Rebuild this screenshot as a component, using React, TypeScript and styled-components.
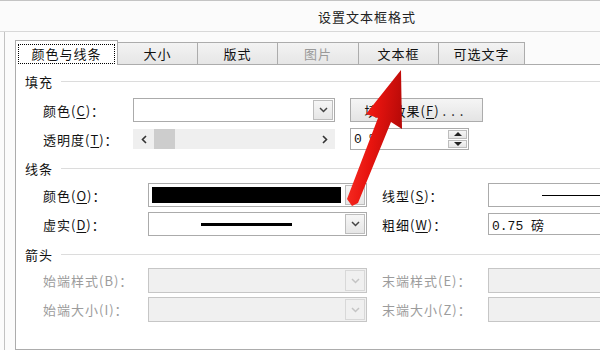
import React from 'react';
import styled, { createGlobalStyle } from 'styled-components';

const GlobalStyle = createGlobalStyle`
  html, body { margin: 0; padding: 0; background: #fff; overflow: hidden; }
  body {
    font-family: "Noto Sans CJK SC", "Noto Sans", sans-serif;
    font-size: 13px;
    color: #111;
  }
  * { box-sizing: border-box; }
`;

const Window = styled.div`
  position: relative;
  width: 600px;
  height: 350px;
  overflow: hidden;
  background: #fbfbfb;
  border-top: 1px solid #c4c4c4;
  display: flex;
  flex-direction: column;
`;

const TitleBar = styled.div`
  flex: none;
  height: 31px;
  display: flex;
  align-items: center;
  padding-left: 318px;
  border-bottom: 1px solid #d8d8d8;
  letter-spacing: 1px;
  color: #222;
`;

const Body = styled.div`
  flex: 1;
  margin-left: 4px;
  border-left: 1px solid #c2c2c2;
  padding: 8px 0 0 10px;
  display: flex;
  flex-direction: column;
`;

const TabStrip = styled.div`
  flex: none;
  height: 24px;
  display: flex;
  align-items: flex-end;
`;

const Tab = styled.div<{ $w: number; $active?: boolean; $disabled?: boolean }>`
  position: relative;
  z-index: ${p => (p.$active ? 2 : 1)};
  width: ${p => p.$w}px;
  height: ${p => (p.$active ? 25 : 22)}px;
  margin-left: ${p => (p.$active ? 0 : -1)}px;
  margin-bottom: ${p => (p.$active ? -1 : 0)}px;
  border: 1px solid #acacac;
  border-bottom: none;
  background: ${p => (p.$active ? '#fff' : 'linear-gradient(#f3f3f3, #e6e6e6)')};
  color: ${p => (p.$disabled ? '#9a9a9a' : '#111')};
  letter-spacing: 1px;
  display: flex;
  align-items: center;
  justify-content: center;
  padding: ${p => (p.$active ? '2px 2px 1px' : '0')};
`;

const FocusRing = styled.div`
  width: 100%;
  height: 20px;
  border: 1px dotted #000;
  display: flex;
  align-items: center;
  justify-content: center;
`;

const Panel = styled.div`
  flex: 1;
  border: 1px solid #acacac;
  border-right: none;
  background: #fff;
  padding-top: 8px;
`;

const SectionHead = styled.div<{ $mt?: number }>`
  display: flex;
  align-items: center;
  height: 16px;
  margin-top: ${p => p.$mt || 0}px;
  padding-left: 9px;
  letter-spacing: 1px;
  color: #111;

  &::after {
    content: '';
    flex: 1;
    height: 1px;
    margin-left: 8px;
    background: #dcdcdc;
  }
`;

const FormGrid = styled.div<{ $cols: string; $mt: number; $gap: number }>`
  display: grid;
  grid-template-columns: ${p => p.$cols};
  row-gap: ${p => p.$gap}px;
  align-items: center;
  padding-left: 27px;
  margin-top: ${p => p.$mt}px;
`;

const Label = styled.div<{ $disabled?: boolean }>`
  letter-spacing: 1px;
  white-space: nowrap;
  color: ${p => (p.$disabled ? '#9c9c9c' : '#111')};

  u { text-decoration-thickness: 1px; text-underline-offset: 2px; }
`;

const Gap = styled.div``;

const Combo = styled.div<{ $h?: number; $disabled?: boolean }>`
  height: ${p => p.$h || 24}px;
  border: 1px solid ${p => (p.$disabled ? '#c6c6c6' : '#ababab')};
  background: ${p => (p.$disabled ? '#f0f0f0' : '#fff')};
  display: flex;
  align-items: stretch;
`;

const ComboValue = styled.div<{ $pad?: number; $center?: boolean }>`
  flex: 1;
  display: flex;
  align-items: center;
  justify-content: ${p => (p.$center ? 'center' : 'flex-start')};
  padding-left: ${p => p.$pad || 0}px;
  min-width: 0;
`;

const Swatch = styled.div`
  flex: 1;
  margin: 3px;
  background: #000;
`;

const StrokeLine = styled.div<{ $w?: number; $t: number }>`
  width: ${p => (p.$w ? `${p.$w}px` : 'auto')};
  flex: ${p => (p.$w ? 'none' : 1)};
  height: ${p => p.$t}px;
  background: #000;
`;

const DropBtn = styled.div<{ $disabled?: boolean }>`
  width: 20px;
  margin: 1px;
  border: 1px solid ${p => (p.$disabled ? '#d8d8d8' : '#bdbdbd')};
  background: ${p => (p.$disabled ? '#f0f0f0' : 'linear-gradient(#f6f6f6, #e6e6e6)')};
  display: flex;
  align-items: center;
  justify-content: center;
  color: ${p => (p.$disabled ? '#c4c4c4' : '#444')};
`;

const PushButton = styled.div`
  height: 24px;
  border: 1px solid #acacac;
  background: linear-gradient(#f5f5f5, #e4e4e4);
  display: flex;
  align-items: center;
  justify-content: center;
  letter-spacing: 1px;

  span { letter-spacing: 5px; margin-left: 3px; }
  u { text-decoration-thickness: 1px; text-underline-offset: 2px; }
`;

const Slider = styled.div`
  height: 20px;
  background: #efefef;
  display: flex;
  align-items: stretch;
  color: #333;
`;

const SliderArrow = styled.div`
  width: 21px;
  display: flex;
  align-items: center;
  justify-content: center;
`;

const SliderThumb = styled.div`
  width: 21px;
  background: #cdcdcd;
`;

const SliderTrack = styled.div`
  flex: 1;
`;

const Spin = styled.div<{ $w: number }>`
  width: ${p => p.$w}px;
  height: 22px;
  border: 1px solid #ababab;
  background: #fff;
  display: flex;
`;

const MonoValue = styled.div`
  flex: 1;
  display: flex;
  align-items: center;
  padding-left: 3px;
  font-family: "Liberation Mono", "Noto Sans CJK SC", monospace;
  font-size: 13px;
`;

const SpinButtons = styled.div`
  width: 19px;
  margin: 1px;
  display: flex;
  flex-direction: column;
  gap: 1px;
`;

const SpinHalf = styled.div`
  flex: 1;
  border: 1px solid #bdbdbd;
  background: linear-gradient(#f6f6f6, #e6e6e6);
  display: flex;
  align-items: center;
  justify-content: center;
`;

const Overlay = styled.svg`
  position: absolute;
  left: 0;
  top: -1px;
  width: 600px;
  height: 350px;
  pointer-events: none;
  z-index: 5;
`;

const Chevron = () => (
  <svg width="9" height="6" viewBox="0 0 9 6">
    <polyline points="1,1 4.5,4.5 8,1" fill="none" stroke="currentColor" strokeWidth="1.5" />
  </svg>
);

const SideChevron = ({ left }: { left?: boolean }) => (
  <svg width="6" height="9" viewBox="0 0 6 9">
    <polyline
      points={left ? '5,1 1.5,4.5 5,8' : '1,1 4.5,4.5 1,8'}
      fill="none"
      stroke="currentColor"
      strokeWidth="1.6"
    />
  </svg>
);

const Tri = ({ up }: { up?: boolean }) => (
  <svg width="8" height="4" viewBox="0 0 8 4">
    <polygon points={up ? '0,4 4,0 8,4' : '0,0 8,0 4,4'} fill="#222" />
  </svg>
);

const tabs = [
  { label: '颜色与线条', w: 103, active: true },
  { label: '大小', w: 81 },
  { label: '版式', w: 81 },
  { label: '图片', w: 82, disabled: true },
  { label: '文本框', w: 81 },
  { label: '可选文字', w: 87 },
];

const App = () => {
  return (
    <Window>
      <GlobalStyle />
      <TitleBar>设置文本框格式</TitleBar>
      <Body>
        <TabStrip>
          {tabs.map(t => (
            <Tab key={t.label} $w={t.w} $active={t.active} $disabled={t.disabled}>
              {t.active ? <FocusRing>{t.label}</FocusRing> : t.label}
            </Tab>
          ))}
        </TabStrip>
        <Panel>
          <SectionHead>填充</SectionHead>
          <FormGrid $cols="90px 202px 15px 133px" $mt={9} $gap={6}>
            <Label>颜色(<u>C</u>)：</Label>
            <Combo>
              <ComboValue />
              <DropBtn><Chevron /></DropBtn>
            </Combo>
            <Gap />
            <PushButton>填充效果(<u>F</u>)<span>...</span></PushButton>

            <Label>透明度(<u>T</u>)：</Label>
            <Slider>
              <SliderArrow><SideChevron left /></SliderArrow>
              <SliderThumb />
              <SliderTrack />
              <SliderArrow><SideChevron /></SliderArrow>
            </Slider>
            <Gap />
            <Spin $w={119}>
              <MonoValue>0 %</MonoValue>
              <SpinButtons>
                <SpinHalf><Tri up /></SpinHalf>
                <SpinHalf><Tri /></SpinHalf>
              </SpinButtons>
            </Spin>
          </FormGrid>

          <SectionHead $mt={10}>线条</SectionHead>
          <FormGrid $cols="105px 219px 15px 106px 160px" $mt={7} $gap={5}>
            <Label>颜色(<u>O</u>)：</Label>
            <Combo>
              <Swatch />
              <DropBtn><Chevron /></DropBtn>
            </Combo>
            <Gap />
            <Label>线型(<u>S</u>)：</Label>
            <Combo>
              <ComboValue $pad={53}>
                <StrokeLine $t={1} />
              </ComboValue>
            </Combo>

            <Label>虚实(<u>D</u>)：</Label>
            <Combo>
              <ComboValue $center>
                <StrokeLine $w={91} $t={3} />
              </ComboValue>
              <DropBtn><Chevron /></DropBtn>
            </Combo>
            <Gap />
            <Label>粗细(<u>W</u>)：</Label>
            <Combo $h={22}>
              <MonoValue>0.75 磅</MonoValue>
            </Combo>
          </FormGrid>

          <SectionHead $mt={10}>箭头</SectionHead>
          <FormGrid $cols="105px 219px 15px 106px 160px" $mt={6} $gap={4}>
            <Label $disabled>始端样式(B)：</Label>
            <Combo $h={25} $disabled>
              <ComboValue />
              <DropBtn $disabled><Chevron /></DropBtn>
            </Combo>
            <Gap />
            <Label $disabled>末端样式(E)：</Label>
            <Combo $h={25} $disabled />

            <Label $disabled>始端大小(I)：</Label>
            <Combo $h={25} $disabled>
              <ComboValue />
              <DropBtn $disabled><Chevron /></DropBtn>
            </Combo>
            <Gap />
            <Label $disabled>末端大小(Z)：</Label>
            <Combo $h={25} $disabled />
          </FormGrid>
        </Panel>
      </Body>

      <Overlay viewBox="0 0 600 350">
        <defs>
          <linearGradient id="redArrow" x1="0" y1="0" x2="1" y2="0.3">
            <stop offset="0" stopColor="#ff3b2e" />
            <stop offset="0.55" stopColor="#e8140f" />
            <stop offset="1" stopColor="#b80a08" />
          </linearGradient>
        </defs>
        <polygon
          points="401,70 402,129 391,122 358,203 352,206 347,199 378,118 366,114"
          fill="url(#redArrow)"
        />
      </Overlay>
    </Window>
  );
};

export default App;
